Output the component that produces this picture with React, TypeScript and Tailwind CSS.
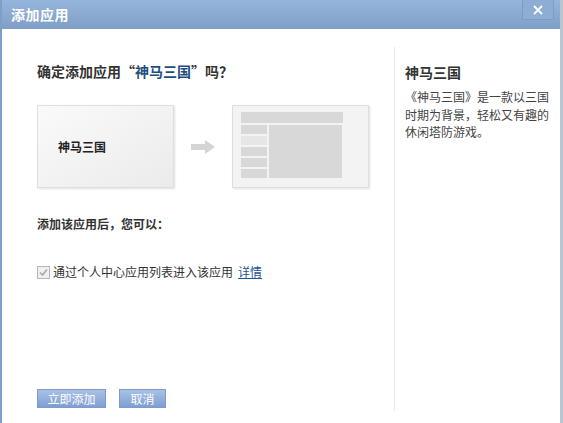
import React from "react";

const font = { fontFamily: '"Noto Sans CJK SC", "Noto Sans", sans-serif' };

function AppPreview() {
  return (
    <div className="w-[137px] h-[83px] border border-[#dedede] bg-gradient-to-br from-[#fafafa] to-[#ebebeb] shadow-[1px_1px_2px_rgba(0,0,0,0.12)] flex items-center pl-[20px]">
      <span className="text-[12px] font-bold text-[#222]">神马三国</span>
    </div>
  );
}

function LayoutPreview() {
  return (
    <div className="w-[137px] h-[83px] border border-[#dedede] bg-[#f3f3f3] shadow-[1px_1px_2px_rgba(0,0,0,0.12)] pt-[6px] pl-[8px]">
      <div className="w-[102px] h-[11px] bg-[#d8d8d8]" />
      <div className="flex gap-[2px] mt-[2px]">
        <div className="flex flex-col gap-[2px]">
          <div className="w-[26px] h-[9px] bg-[#d8d8d8]" />
          <div className="w-[26px] h-[9px] bg-[#e6e6e6]" />
          <div className="w-[26px] h-[9px] bg-[#d8d8d8]" />
          <div className="w-[26px] h-[9px] bg-[#d8d8d8]" />
          <div className="w-[26px] h-[9px] bg-[#d8d8d8]" />
        </div>
        <div className="w-[73px] h-[53px] bg-[#d8d8d8]" />
      </div>
    </div>
  );
}

export default function App() {
  return (
    <div className="w-[563px] h-[423px] bg-white flex flex-col border-l-2 border-[#7f9fc7] border-r-[3px] border-r-[#b9c5d0]" style={font}>
      <div className="h-[29px] shrink-0 bg-gradient-to-b from-[#95b5dc] to-[#809fc6] flex items-center pl-[9px] relative">
        <span className="text-white text-[14px] font-bold tracking-[0.5px]">添加应用</span>
        <div className="absolute right-[6px] top-0 w-[32px] h-[20px] border border-t-0 border-[#7f9bc0] bg-[#8dadd5] flex items-center justify-center">
          <svg width="10" height="10" viewBox="0 0 10 10">
            <path d="M1 1 L9 9 M9 1 L1 9" stroke="#fff" strokeWidth="1.8" />
          </svg>
        </div>
      </div>
      <div className="flex flex-1">
        <div className="w-[392px] shrink-0 pl-[35px] pt-[33px] flex flex-col">
          <div className="text-[14px] font-bold text-[#333] leading-[18px]">
            确定添加应用“<span className="text-[#1f4d7e]">神马三国</span>”吗？
          </div>
          <div className="flex items-center mt-[25px]">
            <AppPreview />
            <svg width="24" height="14" viewBox="0 0 24 14" className="mx-[17px]">
              <rect x="0" y="4" width="15" height="6" fill="#d4d4d4" />
              <polygon points="14,0 24,7 14,14" fill="#d4d4d4" />
            </svg>
            <LayoutPreview />
          </div>
          <div className="mt-[27px] text-[12px] font-bold text-[#333]">添加该应用后，您可以：</div>
          <label className="mt-[30px] flex items-center text-[12px] text-[#333]">
            <span className="w-[13px] h-[13px] border border-[#b8b8b8] bg-[#f0f0f0] flex items-center justify-center mr-[3px]">
              <svg width="9" height="9" viewBox="0 0 9 9">
                <path d="M1 4.5 L3.5 7 L8 1.5" stroke="#a8a8a8" strokeWidth="1.6" fill="none" />
              </svg>
            </span>
            通过个人中心应用列表进入该应用
            <a className="ml-[5px] text-[#1d5694] underline">详情</a>
          </label>
          <div className="mt-auto mb-[15px] flex gap-[13px]">
            <button className="w-[69px] h-[19px] border border-[#7e9bc8] bg-gradient-to-b from-[#a9c1e4] to-[#7e9fd3] text-white text-[12px] leading-none">立即添加</button>
            <button className="w-[47px] h-[19px] border border-[#7e9bc8] bg-gradient-to-b from-[#a9c1e4] to-[#7e9fd3] text-white text-[12px] leading-none">取消</button>
          </div>
        </div>
        <div className="w-px bg-[#e6e6e6] mt-[18px] mb-[12px]" />
        <div className="pl-[10px] pt-[34px] w-[155px]">
          <div className="text-[14px] font-bold text-[#333] leading-[18px]">神马三国</div>
          <p className="mt-[7px] text-[12px] text-[#444] leading-[17.5px]">
            《神马三国》是一款以三国时期为背景，轻松又有趣的休闲塔防游戏。
          </p>
        </div>
      </div>
    </div>
  );
}
